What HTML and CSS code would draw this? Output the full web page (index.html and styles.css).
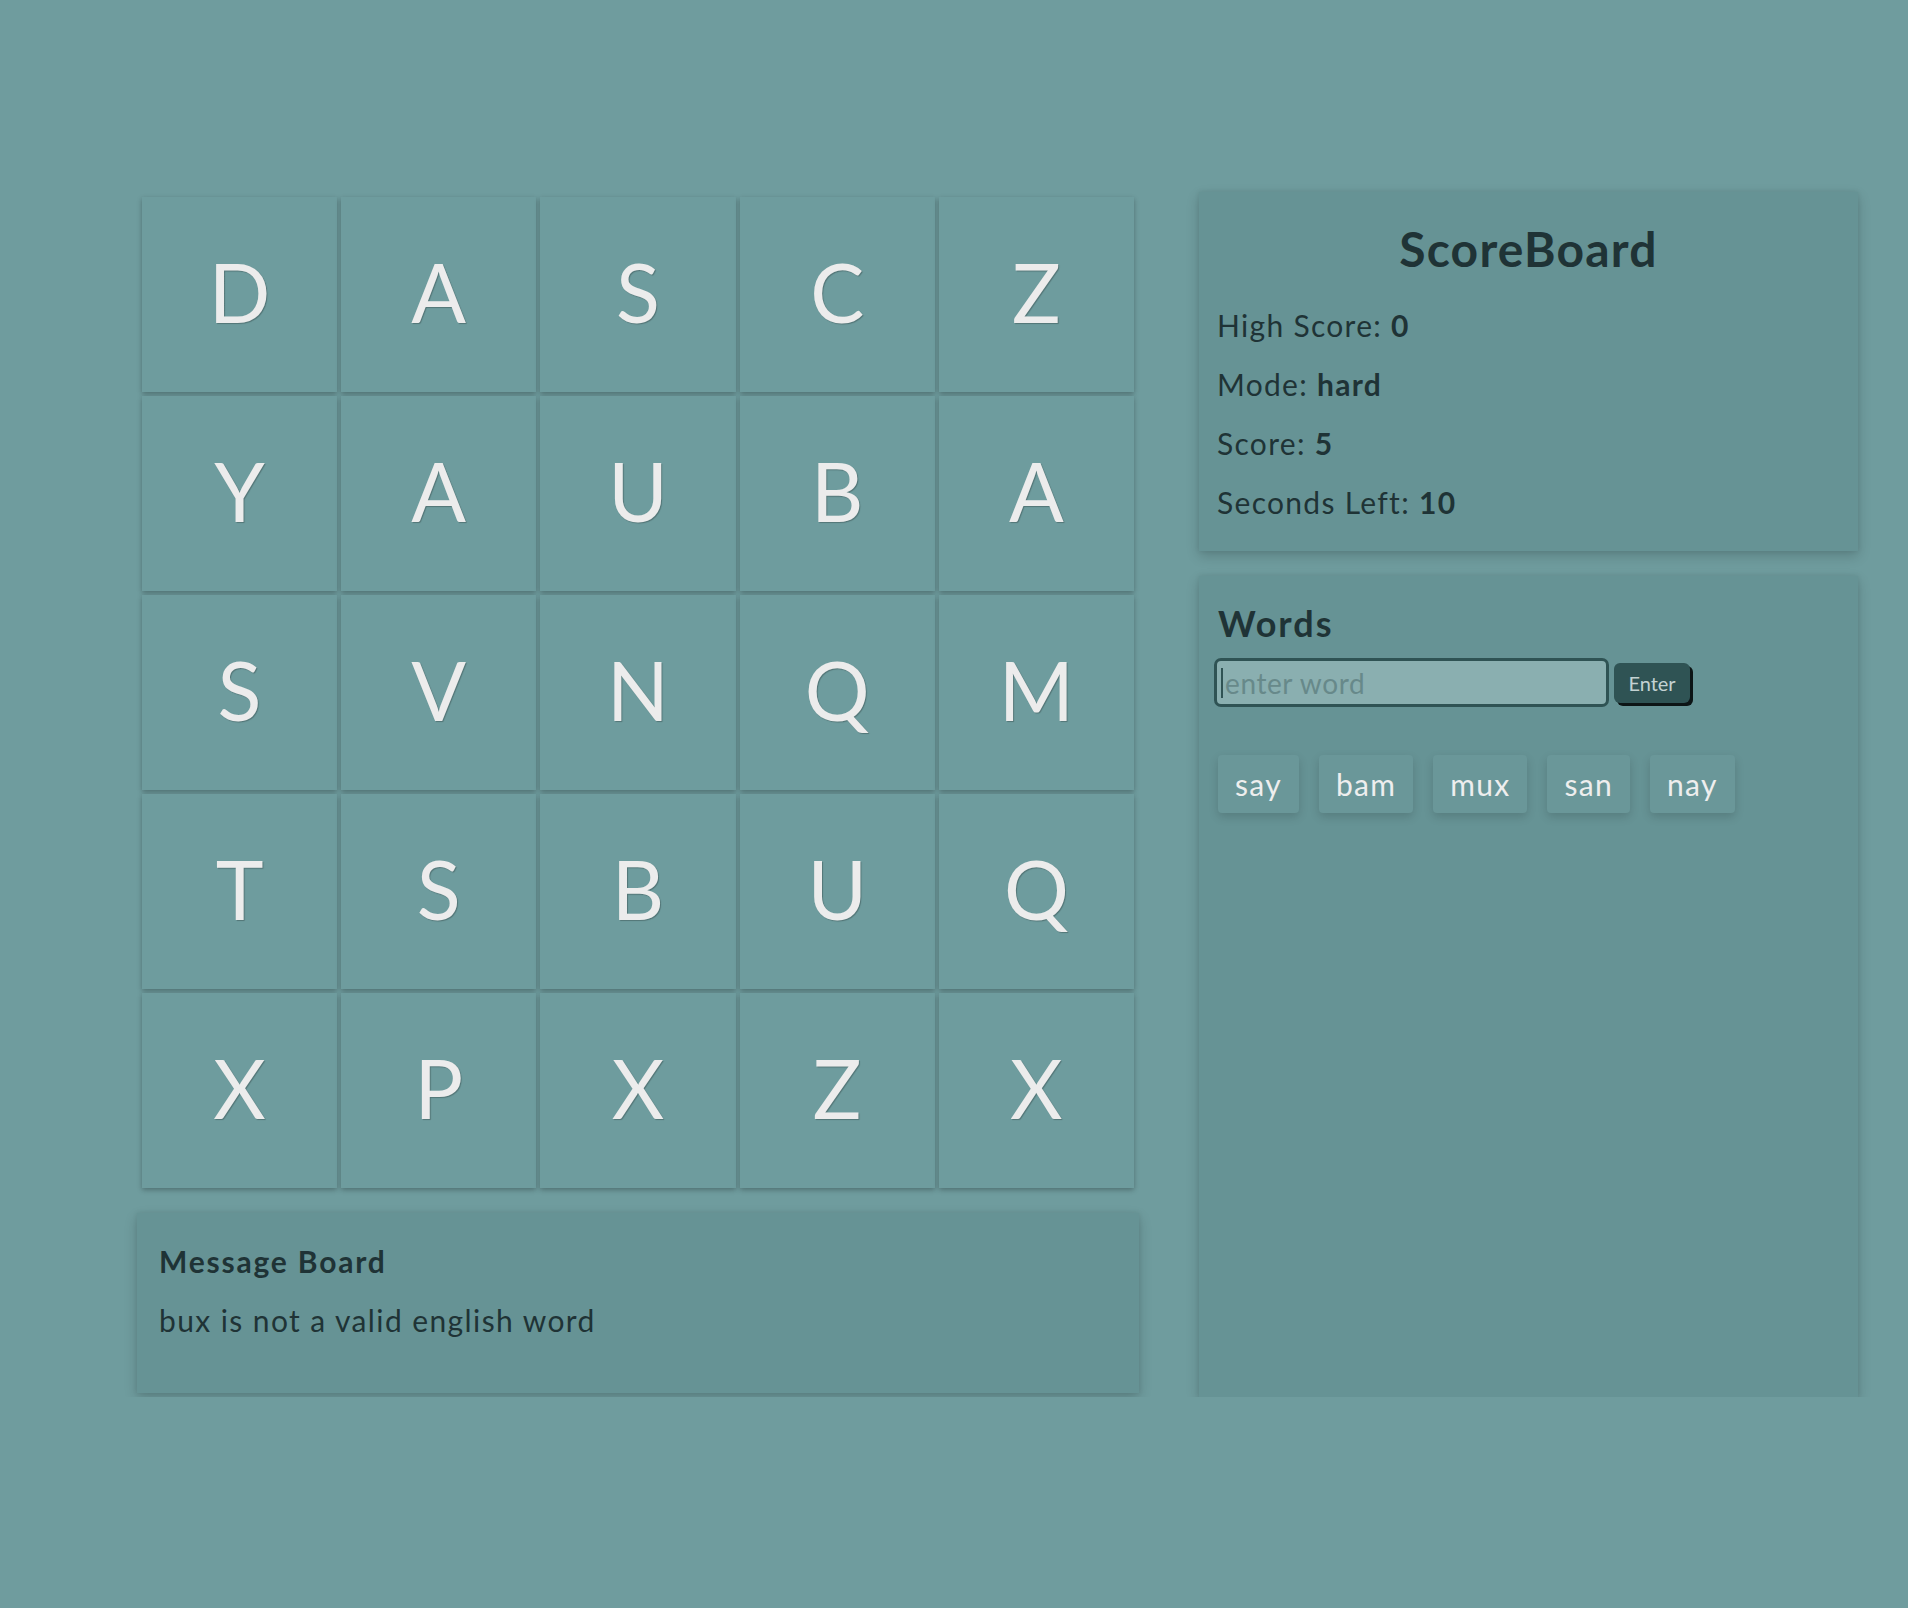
FILE: index.html
```html
<!DOCTYPE html>
<html lang="en">
<head>
<meta charset="utf-8">
<title>Boggle</title>
<link rel="stylesheet" href="styles.css">
</head>
<body>
<main class="app">
  <section class="left">
    <div class="board">
      <div class="tile">D</div><div class="tile">A</div><div class="tile">S</div><div class="tile">C</div><div class="tile">Z</div>
      <div class="tile">Y</div><div class="tile">A</div><div class="tile">U</div><div class="tile">B</div><div class="tile">A</div>
      <div class="tile">S</div><div class="tile">V</div><div class="tile">N</div><div class="tile">Q</div><div class="tile">M</div>
      <div class="tile">T</div><div class="tile">S</div><div class="tile">B</div><div class="tile">U</div><div class="tile">Q</div>
      <div class="tile">X</div><div class="tile">P</div><div class="tile">X</div><div class="tile">Z</div><div class="tile">X</div>
    </div>
    <div class="card message">
      <h3 class="msg-title">Message Board</h3>
      <p class="msg-text">bux is not a valid english word</p>
    </div>
  </section>
  <aside class="right">
    <div class="card score">
      <h1 class="score-title">ScoreBoard</h1>
      <p class="stat">High Score: <b>0</b></p>
      <p class="stat">Mode: <b>hard</b></p>
      <p class="stat">Score: <b>5</b></p>
      <p class="stat">Seconds Left: <b>10</b></p>
    </div>
    <div class="card words">
      <h2 class="words-title">Words</h2>
      <form class="entry">
        <div class="input-wrap">
          <input class="word-input" type="text" placeholder="enter word">
          <span class="caret"></span>
        </div>
        <button class="enter-btn" type="button">Enter</button>
      </form>
      <ul class="chips">
        <li class="chip">say</li>
        <li class="chip">bam</li>
        <li class="chip">mux</li>
        <li class="chip">san</li>
        <li class="chip">nay</li>
      </ul>
    </div>
  </aside>
</main>
</body>
</html>
```
FILE: styles.css
```css
* { box-sizing: border-box; }
html, body {
  margin: 0;
  padding: 0;
  background: #6f9c9e;
  min-height: 100%;
}
body {
  font-family: Lato, "Noto Sans", sans-serif;
  color: #1f3336;
}
.app {
  display: flex;
  align-items: flex-start;
  gap: 60px;
  padding: 192px 0 0 137px;
}
.left {
  width: 1002px;
  padding-top: 5px;
  display: flex;
  flex-direction: column;
  gap: 25px;
}
.board {
  display: grid;
  grid-template-columns: repeat(5, 1fr);
  grid-auto-rows: 195px;
  gap: 4px;
  margin: 0 5px;
}
.tile {
  background: #6e9c9e;
  box-shadow: 0 2px 5px rgba(0, 0, 0, 0.28);
  display: flex;
  align-items: center;
  justify-content: center;
  font-size: 81px;
  line-height: 1;
  padding-bottom: 6px;
  color: #ececec;
  text-shadow: 1px 1px 1px rgba(0, 0, 0, 0.25);
}
.card {
  background: #669395;
  box-shadow: 0 5px 12px rgba(0, 0, 0, 0.18), 0 0 5px rgba(0, 0, 0, 0.08);
}
.message {
  height: 180px;
  padding: 19px 22px 0;
}
.msg-title {
  margin: 0;
  font-size: 30px;
  font-weight: 700;
  line-height: 59px;
  letter-spacing: 1.8px;
}
.msg-text {
  margin: 0;
  font-size: 30px;
  line-height: 59px;
  letter-spacing: 1.4px;
}
.right {
  width: 659px;
  display: flex;
  flex-direction: column;
  gap: 25px;
}
.score {
  height: 359px;
  padding: 28px 18px 0;
}
.score-title {
  margin: 0 0 18px;
  text-align: center;
  font-size: 48px;
  font-weight: 700;
  line-height: 58px;
  letter-spacing: 1.2px;
}
.stat {
  margin: 0;
  font-size: 30px;
  line-height: 59px;
  letter-spacing: 1.3px;
}
.stat b { font-weight: 700; }
.words {
  height: 821px;
  padding: 25px 15px 0;
}
.words-title {
  margin: 0 0 13px 4px;
  font-size: 36px;
  font-weight: 700;
  line-height: 44px;
  letter-spacing: 2px;
}
.entry {
  display: flex;
  align-items: center;
  gap: 5px;
  margin: 0;
}
.input-wrap {
  position: relative;
  width: 395px;
  height: 49px;
}
.word-input {
  width: 100%;
  height: 100%;
  border: 3px solid #2f5354;
  border-radius: 7px;
  background: #8aafb0;
  font-family: Lato, sans-serif;
  font-size: 28px;
  letter-spacing: 0.6px;
  color: #1f3336;
  padding: 0 0 0 8px;
  outline: none;
}
.word-input::placeholder { color: #67898a; }
.caret {
  position: absolute;
  left: 7px;
  top: 10px;
  width: 2px;
  height: 30px;
  background: #2f5354;
}
.enter-btn {
  width: 76px;
  height: 40px;
  border: none;
  border-radius: 6px;
  background: #2f5354;
  color: #c3d2d2;
  font-family: Lato, sans-serif;
  font-size: 20px;
  box-shadow: 3px 3px 0 #0d1516;
  padding: 0;
}
.chips {
  list-style: none;
  margin: 48px 0 0 4px;
  padding: 0;
  display: flex;
  gap: 20px;
}
.chip {
  height: 58px;
  line-height: 58px;
  padding: 0 17px;
  font-size: 30px;
  letter-spacing: 1.3px;
  color: #eeeeee;
  background: #6a9799;
  border-radius: 4px;
  box-shadow: 0 4px 10px rgba(0, 0, 0, 0.15);
}
```
